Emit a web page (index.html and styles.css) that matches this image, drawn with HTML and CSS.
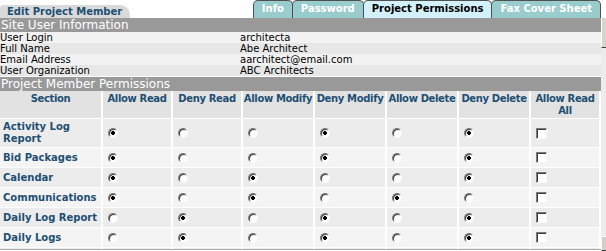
FILE: index.html
```html
<!DOCTYPE html>
<html>
<head>
    <title>Edit Project Member</title>
    <link rel="stylesheet" href="styles.css">
</head>
<body>
    <div class="tabbar">
        <div class="title-tab">Edit Project Member</div>
        <div class="tabs">
            <span class="tab">Info</span>
            <span class="tab">Password</span>
            <span class="tab active">Project Permissions</span>
            <span class="tab">Fax Cover Sheet</span>
        </div>
    </div>
    <div class="frame">
        <div class="pane">
            <div class="bar">Site User Information</div>
            <div class="info-row"><span>User Login</span><span>architecta</span></div>
            <div class="info-row"><span>Full Name</span><span>Abe Architect</span></div>
            <div class="info-row"><span>Email Address</span><span>aarchitect@email.com</span></div>
            <div class="info-row"><span>User Organization</span><span>ABC Architects</span></div>
            <div class="bar gap">Project Member Permissions</div>
            <table class="perms">
                <colgroup>
                    <col style="width:101px"><col style="width:68px"><col style="width:68px"><col style="width:70px">
                    <col style="width:70px"><col style="width:70px"><col style="width:70px"><col style="width:68px">
                </colgroup>
                <tr>
                    <th>Section</th>
                    <th>Allow Read</th>
                    <th>Deny Read</th>
                    <th>Allow Modify</th>
                    <th>Deny Modify</th>
                    <th>Allow Delete</th>
                    <th>Deny Delete</th>
                    <th>Allow Read All</th>
                </tr>
                <tr>
                    <td class="section">Activity Log Report</td>
                    <td><input type="radio" name="r1" checked></td>
                    <td><input type="radio" name="r1"></td>
                    <td><input type="radio" name="m1"></td>
                    <td><input type="radio" name="m1" checked></td>
                    <td><input type="radio" name="d1"></td>
                    <td><input type="radio" name="d1" checked></td>
                    <td><input type="checkbox"></td>
                </tr>
                <tr>
                    <td class="section">Bid Packages</td>
                    <td><input type="radio" name="r2" checked></td>
                    <td><input type="radio" name="r2"></td>
                    <td><input type="radio" name="m2"></td>
                    <td><input type="radio" name="m2" checked></td>
                    <td><input type="radio" name="d2"></td>
                    <td><input type="radio" name="d2" checked></td>
                    <td><input type="checkbox"></td>
                </tr>
                <tr>
                    <td class="section">Calendar</td>
                    <td><input type="radio" name="r3" checked></td>
                    <td><input type="radio" name="r3"></td>
                    <td><input type="radio" name="m3" checked></td>
                    <td><input type="radio" name="m3"></td>
                    <td><input type="radio" name="d3"></td>
                    <td><input type="radio" name="d3" checked></td>
                    <td><input type="checkbox"></td>
                </tr>
                <tr>
                    <td class="section">Communications</td>
                    <td><input type="radio" name="r4" checked></td>
                    <td><input type="radio" name="r4"></td>
                    <td><input type="radio" name="m4" checked></td>
                    <td><input type="radio" name="m4"></td>
                    <td><input type="radio" name="d4" checked></td>
                    <td><input type="radio" name="d4"></td>
                    <td><input type="checkbox"></td>
                </tr>
                <tr>
                    <td class="section">Daily Log Report</td>
                    <td><input type="radio" name="r5"></td>
                    <td><input type="radio" name="r5" checked></td>
                    <td><input type="radio" name="m5"></td>
                    <td><input type="radio" name="m5" checked></td>
                    <td><input type="radio" name="d5"></td>
                    <td><input type="radio" name="d5" checked></td>
                    <td><input type="checkbox"></td>
                </tr>
                <tr>
                    <td class="section">Daily Logs</td>
                    <td><input type="radio" name="r6"></td>
                    <td><input type="radio" name="r6" checked></td>
                    <td><input type="radio" name="m6"></td>
                    <td><input type="radio" name="m6" checked></td>
                    <td><input type="radio" name="d6"></td>
                    <td><input type="radio" name="d6" checked></td>
                    <td><input type="checkbox"></td>
                </tr>
                <tr class="next-row">
                    <td class="section"></td>
                    <td></td><td></td><td></td><td></td><td></td><td></td><td></td>
                </tr>
            </table>
        </div>
        <div class="scrollbar">
            <div class="thumb"></div>
            <div class="track"></div>
            <div class="arrow"></div>
        </div>
    </div>
</body>
</html>
```
FILE: styles.css
```css
body {
    margin: 0;
    background-color: white;
    font-family: "DejaVu Sans", Verdana, sans-serif;
    font-size: 10px;
    overflow: hidden;
}
.tabbar {
    display: flex;
    justify-content: space-between;
    align-items: flex-end;
    height: 18px;
}
.title-tab {
    height: 13px;
    line-height: 14px;
    padding: 0 8px 0 7px;
    background-color: #dadada;
    border-radius: 3px 10px 0 0;
    color: #1d4f73;
    font-weight: bold;
}
.tabs {
    display: flex;
    margin-right: 5px;
}
.tab {
    height: 17px;
    line-height: 15px;
    padding: 0 8px;
    margin-left: -1px;
    background-color: #99cccc;
    border: 1px solid #505050;
    border-bottom: none;
    border-radius: 5px 5px 0 0;
    color: white;
    font-weight: bold;
}
.tab.active {
    background-color: #d2f1fb;
    color: black;
}
.frame {
    display: flex;
    align-items: flex-start;
    height: 233px;
}
.pane {
    flex: 1;
    height: 231px;
    overflow: hidden;
    border-bottom: 1px solid #a8a8a8;
}
.bar {
    height: 14px;
    line-height: 14px;
    padding-left: 1px;
    background-color: #999999;
    color: white;
    font-size: 12px;
}
.bar.gap {
    margin-top: 1px;
}
.info-row {
    display: grid;
    grid-template-columns: 240px 1fr;
    height: 11px;
    line-height: 11px;
    color: black;
    background-color: #f2f2f2;
}
.info-row:nth-of-type(odd) {
    background-color: #e7e7e7;
}
.perms {
    table-layout: fixed;
    width: 603px;
    margin: -1px 0 0 -2px;
    border-collapse: separate;
    border-spacing: 2px 1px;
}
.perms th {
    padding: 2px 0 1px;
    line-height: 12px;
    height: 24px;
    vertical-align: top;
    background-color: #e2e2e2;
    color: #1d4f73;
    font-weight: bold;
    letter-spacing: -0.35px;
    text-align: center;
}
.perms td {
    padding: 2px 4px;
    line-height: 12px;
    vertical-align: middle;
    background-color: #ececec;
}
.perms tr:nth-child(odd) td {
    background-color: #f4f4f4;
}
.perms td.section {
    padding-left: 3px;
    color: #1d4f73;
    font-weight: bold;
}
.perms .next-row td {
    height: 14px;
}
.perms input {
    appearance: none;
    display: block;
    width: 10px;
    height: 10px;
    margin: 2px 0 2px 1px;
    border: 1px solid;
    border-color: #7a7a7a #f8f8f8 #f8f8f8 #7a7a7a;
    border-radius: 50%;
    background-color: white;
    box-shadow: inset 1px 1px 0 #3c3c3c;
}
.perms input:checked {
    background: radial-gradient(circle, #000 0 1.6px, #fff 2.2px);
}
.perms input[type="checkbox"] {
    width: 11px;
    height: 11px;
    border-radius: 0;
}
.scrollbar {
    display: flex;
    flex-direction: column;
    width: 5px;
    height: 233px;
}
.thumb {
    height: 29px;
    background-color: #d8d5ce;
    border-left: 1px solid white;
    border-bottom: 1px solid #404040;
}
.track {
    flex: 1;
    background-color: #ececec;
}
.arrow {
    height: 13px;
    background-color: #d4d0c8;
    border-top: 1px solid #f8f8f8;
    border-left: 1px solid #f8f8f8;
    border-bottom: 1px solid #404040;
}
```
